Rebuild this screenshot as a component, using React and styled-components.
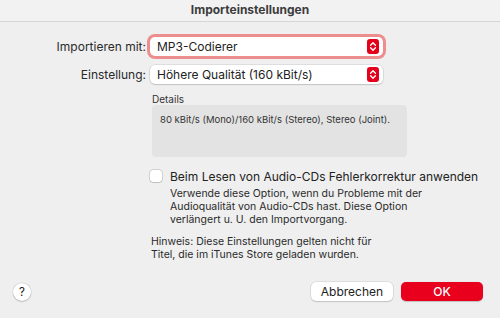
import styled, { createGlobalStyle } from 'styled-components';

const Global = createGlobalStyle`
  body { margin: 0; background: #efefef; }
`;

function Stepper() {
  return (
    <StepIcon>
      <svg width="8" height="11" viewBox="0 0 8 11">
        <path d="M1.6 4.2 L4 1.8 L6.4 4.2 M1.6 6.8 L4 9.2 L6.4 6.8" fill="none" stroke="#fff" strokeWidth="1.4" strokeLinecap="round" strokeLinejoin="round" />
      </svg>
    </StepIcon>
  );
}

function Select({ label, value, focused }) {
  return (
    <Row>
      <Label>{label}</Label>
      <Popup $focused={focused}>
        <span>{value}</span>
        <Stepper />
      </Popup>
    </Row>
  );
}

export default function App() {
  return (
    <>
      <Global />
      <Window>
        <TitleBar>Importeinstellungen</TitleBar>
        <Body>
          <Select label="Importieren mit:" value="MP3-Codierer" focused />
          <Select label="Einstellung:" value="Höhere Qualität (160 kBit/s)" />

          <Details>
            <SmallTitle>Details</SmallTitle>
            <DetailBox>80 kBit/s (Mono)/160 kBit/s (Stereo), Stereo (Joint).</DetailBox>
          </Details>

          <CheckRow>
            <Box />
            <CheckLabel>Beim Lesen von Audio-CDs Fehlerkorrektur anwenden</CheckLabel>
          </CheckRow>
          <Help>
            Verwende diese Option, wenn du Probleme mit der<br />
            Audioqualität von Audio-CDs hast. Diese Option<br />
            verlängert u. U. den Importvorgang.
          </Help>
          <Note>
            Hinweis: Diese Einstellungen gelten nicht für<br />
            Titel, die im iTunes Store geladen wurden.
          </Note>
        </Body>
        <Footer>
          <HelpButton>?</HelpButton>
          <Buttons>
            <Button>Abbrechen</Button>
            <Button $primary>OK</Button>
          </Buttons>
        </Footer>
      </Window>
    </>
  );
}

const Window = styled.div`
  width: 500px;
  height: 318px;
  background: #efefef;
  font-family: Inter, "Liberation Sans", sans-serif;
  color: #262626;
  display: flex;
  flex-direction: column;
  overflow: hidden;
`;

const TitleBar = styled.div`
  height: 21px;
  line-height: 19px;
  text-align: center;
  font-size: 12px;
  font-weight: 700;
  color: #3c3c3c;
  background: #f2f2f2;
  border-bottom: 1px solid #d6d6d6;
`;

const Body = styled.div`
  padding-top: 14px;
  display: flex;
  flex-direction: column;
`;

const Row = styled.div`
  display: flex;
  align-items: center;
  height: 20px;
  margin-bottom: 8px;
`;

const Label = styled.div`
  width: 146px;
  text-align: right;
  font-size: 12px;
  color: #2a2a2a;
`;

const Popup = styled.div`
  margin-left: 4px;
  width: 233px;
  height: 19px;
  box-sizing: border-box;
  background: #fff;
  border-radius: 5px;
  display: flex;
  align-items: center;
  justify-content: space-between;
  padding: 0 4px 0 7px;
  font-size: 12px;
  color: #222;
  box-shadow: ${p => p.$focused
    ? '0 0 0 3px rgba(236, 110, 110, 0.75)'
    : '0 0 0 0.5px rgba(0,0,0,0.14), 0 1px 1.5px rgba(0,0,0,0.12)'};
`;

const StepIcon = styled.span`
  width: 12px;
  height: 15px;
  border-radius: 3px;
  background: #e3001b;
  display: flex;
  align-items: center;
  justify-content: center;
`;

const Details = styled.div`
  margin-left: 152px;
  margin-top: 2px;
`;

const SmallTitle = styled.div`
  font-size: 10px;
  line-height: 11px;
  color: #333;
`;

const DetailBox = styled.div`
  width: 255px;
  height: 52px;
  box-sizing: border-box;
  background: #e3e3e3;
  border-radius: 4px;
  padding: 9px 8px;
  font-size: 9.5px;
  line-height: 12px;
  color: #333;
`;

const CheckRow = styled.div`
  display: flex;
  align-items: center;
  height: 16px;
  margin: 11px 0 0 150px;
`;

const Box = styled.span`
  width: 12px;
  height: 12px;
  box-sizing: border-box;
  border-radius: 3px;
  background: #fff;
  box-shadow: 0 0 0 0.5px rgba(0,0,0,0.25), 0 1px 1px rgba(0,0,0,0.08);
`;

const CheckLabel = styled.span`
  margin-left: 8px;
  font-size: 12px;
  color: #222;
`;

const Help = styled.div`
  margin: 3px 0 0 170px;
  font-size: 10.5px;
  line-height: 13px;
  color: #2a2a2a;
`;

const Note = styled.div`
  margin: 9px 0 0 151px;
  font-size: 10.5px;
  line-height: 13px;
  color: #2a2a2a;
`;

const Footer = styled.div`
  margin-top: auto;
  height: 36px;
  box-sizing: border-box;
  display: flex;
  align-items: flex-start;
  justify-content: space-between;
  padding: 0 17px 0 13px;
`;

const HelpButton = styled.span`
  margin-top: 1px;
  width: 18px;
  height: 18px;
  border-radius: 50%;
  background: #fff;
  box-shadow: 0 0 0 0.5px rgba(0,0,0,0.15), 0 1px 1.5px rgba(0,0,0,0.15);
  display: flex;
  align-items: center;
  justify-content: center;
  font-size: 11.5px;
  color: #222;
`;

const Buttons = styled.div`
  display: flex;
  gap: 8px;
`;

const Button = styled.span`
  width: 82px;
  height: 19px;
  border-radius: 5px;
  display: flex;
  align-items: center;
  justify-content: center;
  font-size: 12px;
  background: ${p => (p.$primary ? '#e8001c' : '#fff')};
  color: ${p => (p.$primary ? '#fff' : '#222')};
  font-weight: ${p => (p.$primary ? 500 : 400)};
  box-shadow: ${p => (p.$primary
    ? '0 0.5px 1px rgba(0,0,0,0.2)'
    : '0 0 0 0.5px rgba(0,0,0,0.14), 0 1px 1.5px rgba(0,0,0,0.12)')};
`;
